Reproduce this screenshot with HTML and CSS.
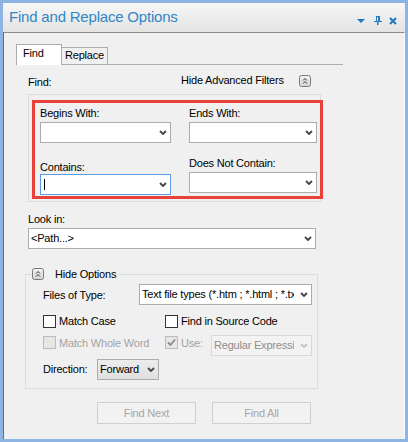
FILE: index.html
```html
<!DOCTYPE html>
<html>
<head>
<meta charset="utf-8">
<link rel="stylesheet" href="styles.css">
</head>
<body>
<div class="window">
  <div class="titlebar">
    <span class="title">Find and Replace Options</span>
    <div class="title-icons">
      <svg class="ti-menu" width="8" height="4" viewBox="0 0 8 4"><polygon points="0,0 8,0 4,4" fill="#1f78c1"/></svg>
      <svg class="ti-pin" width="8" height="9" viewBox="0 0 8 9"><rect x="2.5" y="0.5" width="3" height="5" fill="none" stroke="#1f78c1"/><rect x="4" y="0" width="2" height="5" fill="#1f78c1"/><rect x="0" y="5" width="8" height="1" fill="#1f78c1"/><rect x="3" y="6" width="1.5" height="3" fill="#1f78c1"/></svg>
      <svg class="ti-close" width="8" height="8" viewBox="0 0 8 8"><path d="M1 1 L7 7 M7 1 L1 7" stroke="#1f78c1" stroke-width="2"/></svg>
    </div>
  </div>
  <div class="panel">
    <div class="tabstrip">
      <div class="tab tab-active">Find</div>
      <div class="tab tab-idle">Replace</div>
    </div>
    <div class="page">
      <div class="find-head">
        <span class="find-lbl">Find:</span>
        <span class="adv-lbl">Hide Advanced Filters</span>
        <svg class="collapse" width="12" height="12" viewBox="0 0 12 12"><defs><linearGradient id="cg" x1="0" y1="0" x2="0" y2="1"><stop offset="0" stop-color="#f4f4f4"/><stop offset="1" stop-color="#d4d4d4"/></linearGradient></defs><rect x="0.5" y="0.5" width="11" height="11" rx="2" fill="url(#cg)" stroke="#7a7a7a"/><path d="M4 5.5 L6 3.5 L8 5.5 M4 8.5 L6 6.5 L8 8.5" fill="none" stroke="#333" stroke-width="1"/></svg>
      </div>

      <div class="group adv-group">
        <div class="highlight">
          <div class="col col-left">
            <div class="lbl lbl-top">Begins With:</div>
            <div class="combo w131 combo-gap"><span class="combo-text"></span><svg class="chev" width="8" height="5" viewBox="0 0 8 5"><path d="M1 1 L4 4 L7 1" fill="none" stroke="#444" stroke-width="1.8"/></svg></div>
            <div class="lbl lbl-contains">Contains:</div>
            <div class="combo w131 combo-focus"><span class="combo-text"><span class="caret"></span></span><svg class="chev" width="8" height="5" viewBox="0 0 8 5"><path d="M1 1 L4 4 L7 1" fill="none" stroke="#444" stroke-width="1.8"/></svg></div>
          </div>
          <div class="col col-right">
            <div class="lbl lbl-top">Ends With:</div>
            <div class="combo w128 combo-gap"><span class="combo-text"></span><svg class="chev" width="8" height="5" viewBox="0 0 8 5"><path d="M1 1 L4 4 L7 1" fill="none" stroke="#444" stroke-width="1.8"/></svg></div>
            <div class="lbl lbl-dnc">Does Not Contain:</div>
            <div class="combo w128 combo-gap"><span class="combo-text"></span><svg class="chev" width="8" height="5" viewBox="0 0 8 5"><path d="M1 1 L4 4 L7 1" fill="none" stroke="#444" stroke-width="1.8"/></svg></div>
          </div>
        </div>
      </div>

      <div class="lbl lookin-lbl">Look in:</div>
      <div class="combo w288 combo-gap"><span class="combo-text">&lt;Path...&gt;</span><svg class="chev" width="8" height="5" viewBox="0 0 8 5"><path d="M1 1 L4 4 L7 1" fill="none" stroke="#444" stroke-width="1.8"/></svg></div>

      <div class="group opts-group">
        <div class="legend">
          <svg class="collapse" width="12" height="12" viewBox="0 0 12 12"><rect x="0.5" y="0.5" width="11" height="11" rx="2" fill="url(#cg)" stroke="#7a7a7a"/><path d="M4 5.5 L6 3.5 L8 5.5 M4 8.5 L6 6.5 L8 8.5" fill="none" stroke="#333" stroke-width="1"/></svg>
          <span class="legend-text">Hide Options</span>
        </div>

        <div class="row row-types">
          <span class="types-lbl">Files of Type:</span>
          <div class="combo w173"><span class="combo-text">Text file types (*.htm ; *.html ; *.txt)</span><svg class="chev" width="8" height="5" viewBox="0 0 8 5"><path d="M1 1 L4 4 L7 1" fill="none" stroke="#444" stroke-width="1.8"/></svg></div>
        </div>

        <div class="row row-checks1">
          <div class="check-item first">
            <span class="box"></span><span class="check-lbl">Match Case</span>
          </div>
          <div class="check-item">
            <span class="box"></span><span class="check-lbl">Find in Source Code</span>
          </div>
        </div>

        <div class="row row-checks2">
          <div class="check-item first dis">
            <span class="box box-dis"></span><span class="check-lbl">Match Whole Word</span>
          </div>
          <div class="check-item dis">
            <span class="box box-dis"><svg width="11" height="11" viewBox="0 0 11 11"><path d="M2 5.5 L4.5 8 L9 2.5" fill="none" stroke="#8a8a8a" stroke-width="1.8"/></svg></span><span class="check-lbl use-lbl">Use:</span>
          </div>
          <div class="combo w101 combo-dis"><span class="combo-text">Regular Expressions</span><svg class="chev" width="8" height="5" viewBox="0 0 8 5"><path d="M1 1 L4 4 L7 1" fill="none" stroke="#c4c4c4" stroke-width="1.8"/></svg></div>
        </div>

        <div class="row row-dir">
          <span class="dir-lbl">Direction:</span>
          <div class="combo w62 combo-btn"><span class="combo-text">Forward</span><svg class="chev" width="8" height="5" viewBox="0 0 8 5"><path d="M1 1 L4 4 L7 1" fill="none" stroke="#444" stroke-width="1.8"/></svg></div>
        </div>
      </div>

      <div class="buttons">
        <div class="btn">Find Next</div>
        <div class="btn">Find All</div>
      </div>
    </div>
  </div>
</div>
</body>
</html>
```

FILE: styles.css
```css
* { box-sizing: border-box; }
html, body { margin: 0; padding: 0; }
body {
  font-family: "Liberation Sans", Arial, sans-serif;
  font-size: 11px;
  line-height: 13px;
  letter-spacing: -0.2px;
  color: #000;
}
.window {
  width: 408px;
  height: 442px;
  border: 3px solid #8db4e2;
  display: flex;
  flex-direction: column;
  background: #f0f0f0;
}
.titlebar {
  height: 29px;
  flex: none;
  display: flex;
  align-items: flex-start;
  padding: 5px 8px 0 6px;
  background: linear-gradient(#f7f7f7, #e3e3e3);
}
.title {
  font-size: 15px;
  line-height: 18px;
  color: #3087c6;
  letter-spacing: -0.2px;
}
.title-icons {
  margin-left: auto;
  display: flex;
  align-items: flex-start;
}
.ti-menu { margin-top: 11px; display: block; }
.ti-pin { margin-top: 8px; margin-left: 9px; display: block; }
.ti-close { margin-top: 9px; margin-left: 7px; display: block; }

.panel {
  flex: 1;
  border-top: 1px solid #8c8c8c;
  border-left: 1px solid #6a6a74;
  border-right: 1px solid #fbfbfb;
  background: #f0f0f0;
}
.tabstrip {
  margin: 11px 0 0 12px;
  width: 327px;
  height: 21px;
  display: flex;
  align-items: flex-end;
  border-bottom: 1px solid #adadad;
}
.tab { width: 46px; }
.tab-active {
  height: 21px;
  margin-bottom: -1px;
  border: 1px solid #adadad;
  border-bottom: 0;
  background: #fff;
  padding: 2px 0 0 6px;
  position: relative;
}
.tab-idle {
  height: 17px;
  border: 1px solid #adadad;
  border-left: 0;
  border-bottom: 0;
  background: #f0f0f0;
  padding: 1px 0 0 3px;
}
.page { padding-left: 24px; }

.find-head {
  margin-top: 9px;
  height: 13px;
  display: flex;
  align-items: flex-start;
}
.find-lbl { width: 153px; margin-top: 2px; }
.adv-lbl { width: 118px; }
.collapse { display: block; margin-top: 1px; }

.group {
  border: 1px solid #dcdcdc;
  width: 293px;
}
.adv-group {
  margin-top: 7px;
  padding: 5px 0 2px 3px;
}
.highlight {
  width: 291px;
  border: 3px solid #e8413c;
  display: flex;
  padding: 0 0 1px 5px;
}
.col { display: flex; flex-direction: column; }
.col-left { width: 149px; }
.lbl-top { margin-top: 4px; }
.lbl-contains { margin-top: 18px; }
.lbl-dnc { margin-top: 14px; }
.combo-gap { margin-top: 2px; }

.combo {
  height: 21px;
  border: 1px solid #acacac;
  background: #fff;
  display: flex;
  align-items: center;
  line-height: 19px;
}
.combo-text {
  flex: 1;
  min-width: 0;
  overflow: hidden;
  white-space: nowrap;
  padding-left: 2px;
  height: 19px;
  display: flex;
  align-items: center;
}
.chev { flex: none; display: block; margin: 0 3px 0 6px; }
.w131 { width: 131px; }
.w128 { width: 128px; }
.w288 { width: 288px; }
.w173 { width: 173px; }
.w101 { width: 101px; }
.w62 { width: 62px; }
.combo-focus { border-color: #569de5; }
.caret {
  display: block;
  width: 1px;
  height: 11px;
  background: #000;
  margin-left: 1px;
}
.combo-dis {
  background: #f3f3f3;
  border-color: #d9d9d9;
  color: #8d8d8d;
}
.combo-btn {
  background: linear-gradient(#ececec, #e0e0e0);
  border-color: #acacac;
}

.lookin-lbl { margin-top: 11px; }

.opts-group {
  margin-top: 25px;
  margin-left: -3px;
  padding: 0 0 8px 17px;
}
.legend {
  margin: -7px 0 0 -11px;
  display: flex;
  align-items: flex-start;
  width: fit-content;
  background: #f0f0f0;
  padding-right: 3px;
  height: 13px;
}
.legend .collapse { margin-top: 0; }
.legend-text { margin-left: 11px; }

.row { display: flex; align-items: flex-start; }
.row-types { margin-top: 3px; }
.types-lbl { width: 96px; margin-top: 5px; }
.row-checks1 { margin-top: 10px; }
.row-checks2 { margin-top: 7px; }
.check-item { display: flex; align-items: flex-start; }
.check-item.first { width: 122px; }
.box {
  width: 13px;
  height: 13px;
  border: 1px solid #333;
  background: #fff;
  flex: none;
  display: block;
}
.box svg { display: block; }
.check-lbl { margin-left: 3px; }
.row-checks2 .box { margin-top: 1px; }
.row-checks2 .check-lbl { margin-top: 2px; }
.box-dis { background: #e6e6e6; border-color: #bcbcbc; }
.dis { color: #a3a3a3; }
.use-lbl { width: 30px; }
.row-dir { margin-top: 3px; }
.dir-lbl { width: 54px; margin-top: 4px; }

.buttons {
  margin: 13px 0 0 69px;
  display: flex;
  gap: 16px;
}
.btn {
  width: 99px;
  height: 22px;
  border: 1px solid #d0d0d0;
  background: #f2f2f2;
  color: #a6a6a6;
  text-align: center;
  line-height: 20px;
}
```
